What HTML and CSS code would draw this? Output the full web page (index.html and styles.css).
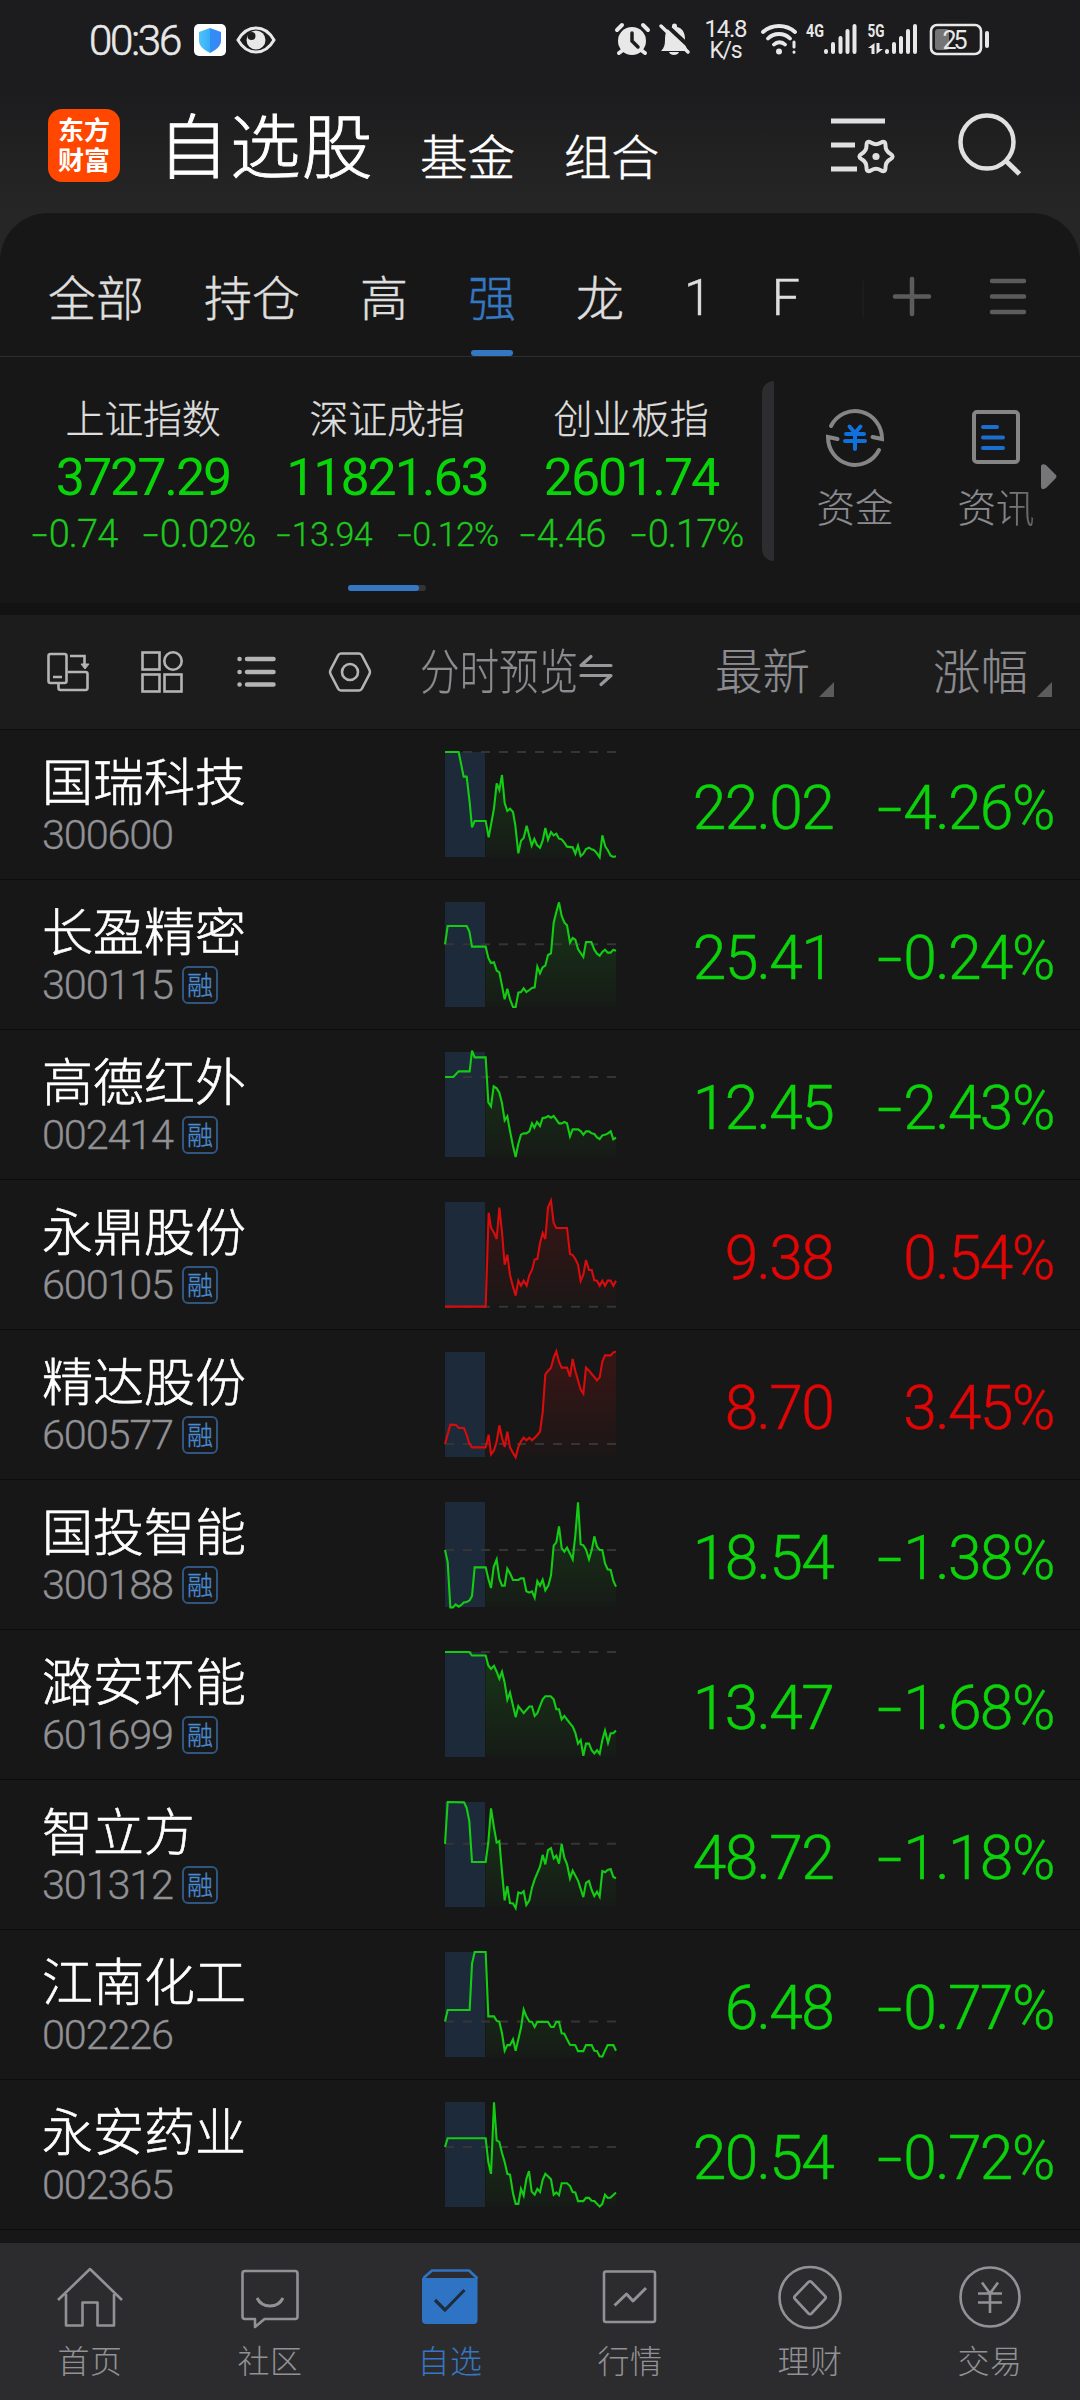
FILE: index.html
```
<!DOCTYPE html>
<html lang="zh-CN">
<head>
<meta charset="utf-8">
<title>自选股</title>
<link rel="stylesheet" href="styles.css">
</head>
<body>
<header class="top">
  <div class="status">
    <span class="clock">00:36</span>
    <svg class="shield" width="32" height="32" viewBox="0 0 32 32"><defs><linearGradient id="sh"><stop offset="0" stop-color="#4cc4fa"/><stop offset=".5" stop-color="#38acf8"/><stop offset=".5" stop-color="#2f8ff5"/><stop offset="1" stop-color="#3a86f6"/></linearGradient></defs><rect width="32" height="32" rx="5" fill="#fff"/><path d="M16 4 27 8v9c0 5-5 9-11 12C10 26 5 22 5 17V8z" fill="url(#sh)"/></svg>
    <svg class="eye" width="40" height="28" viewBox="0 0 40 28"><path d="M2 14C11-2 29-2 38 14 29 30 11 30 2 14z" fill="none" stroke="#e8e8e8" stroke-width="3"/><circle cx="20" cy="14" r="9.5" fill="#e8e8e8"/><circle cx="15.500" cy="10" r="4" fill="#1d1d1e"/></svg>
    <svg class="signals" width="384" height="60" viewBox="612 10 384 60" fill="#e8e8e8">
      <!-- alarm -->
      <circle cx="632" cy="41" r="14"/>
      <path d="M617 30l5-5M648 30l-5-5M623 50l-4 3M641 50l4 3" stroke="#e8e8e8" stroke-width="4" stroke-linecap="round"/>
      <path d="M632 33v8l6 6" fill="none" stroke="#1d1d1e" stroke-width="3.500" stroke-linecap="round"/>
      <!-- muted bell -->
      <path d="M661 51c3-3 4-6 4-11 0-8 2-12 7-13v-1a2.500 2.500 0 0 1 5 0v1c5 1 8 5 8 12 0 5 1 9 3 12zM669 52h10c-1 4-9 4-10 0z"/>
      <path d="M663 22l30 28" stroke="#1d1d1e" stroke-width="4"/>
      <path d="M661 26l27 26" stroke="#e8e8e8" stroke-width="3.500" stroke-linecap="round"/>
      <!-- network speed -->
      <text x="726" y="37" class="st" font-size="24" text-anchor="middle" textLength="43">14.8</text>
      <text x="726" y="58" class="st" font-size="23" text-anchor="middle" textLength="33">K/s</text>
      <!-- wifi -->
      <g fill="none" stroke="#e8e8e8" stroke-width="3.800" stroke-linecap="round"><path d="M763 32c9-8 23-8 32 0M768 38.500c6-6 16-6 22 0M774 44.500c3-3 8-3 11 0"/><path d="M794 42v5M794 52v.2" stroke-width="3"/></g>
      <circle cx="779" cy="51.500" r="3"/>
      <text x="806" y="37" class="st net" font-size="19" textLength="18" lengthAdjust="spacingAndGlyphs">4G</text>
      <text x="867.500" y="37" class="st net" font-size="19" textLength="17" lengthAdjust="spacingAndGlyphs">5G</text>
      <g stroke="#e8e8e8" stroke-width="4" stroke-linecap="round">
        <path d="M826 51v1M833 44v8M840.500 38v14M847.500 31v21M854.500 26v26"/>
        <path d="M887 51v1M894 44v8M901 38v14M908 31v21M915 26v26"/>
      </g>
      <path d="M874.500 54h-3v-6h-3.500l6.500-5zM876.500 43h3v6h3.500l-6.500 5z"/>
      <!-- battery -->
      <rect x="931" y="25" width="50" height="29" rx="6" fill="none" stroke="#e8e8e8" stroke-width="2.600"/>
      <rect x="935" y="29" width="14" height="21" rx="3" fill="#747474"/>
      <rect x="985" y="31" width="4" height="17" rx="2"/>
      <text x="955" y="49" class="st" font-size="25" text-anchor="middle" textLength="25">25</text>
    </svg>
  </div>
  <div class="titlebar">
    <div class="logo"><span>东方</span><span>财富</span></div>
    <h1 class="title">自选股</h1>
    <span class="link">基金</span>
    <span class="link">组合</span>
    <svg class="actions" width="200" height="76" viewBox="826 104 200 76" fill="none" stroke="#e0e0e0">
      <path d="M831 121h54M831 145h24M831 169h26" stroke-width="5"/>
      <path transform="translate(876 156.500)" d="M14.300 2.800Q9.500 5.500 9.500 11 9.500 16.500 4.700 13.700 0 11-4.700 13.700-9.500 16.500-9.500 11-9.500 5.500-14.300 2.800-19 0-14.300-2.800-9.500-5.500-9.500-11-9.500-16.500-4.700-13.700 0-11 4.700-13.700 9.500-16.500 9.500-11 9.500-5.500 14.300-2.800 19 0 14.300 2.800z" stroke-width="4"/>
      <circle cx="876" cy="156.500" r="3.600" fill="#e0e0e0" stroke="none"/>
      <circle cx="987" cy="142" r="26.500" stroke-width="4.500"/><path d="M1006 161l13.500 13" stroke-width="5"/>
    </svg>
  </div>
</header>
<main class="panel">
  <nav class="tabs">
    <span>全部</span><span>持仓</span><span>高</span><span class="on">强</span><span>龙</span><span class="rb">1</span><span class="rb">F</span>
    <svg class="tabtools" width="180" height="44" viewBox="860 274 180 44" fill="none" stroke="#5c5c5c" stroke-width="4.500" stroke-linecap="round">
      <path d="M863 281v36" stroke="#1f1f1f" stroke-width="1.500"/>
      <path d="M895 296.500h34M912 279v35M992 281h32M992 296.500h32M992 312h32"/>
    </svg>
  </nav>
  <section class="indices">
    <div class="index"><div class="iname">上证指数</div><div class="ival">3727.29</div><div class="ichg"><span><i>-</i>0.74</span><span><i>-</i>0.02%</span></div></div>
    <div class="index"><div class="iname">深证成指</div><div class="ival">11821.63</div><div class="ichg small"><span><i>-</i>13.94</span><span><i>-</i>0.12%</span></div></div>
    <div class="index"><div class="iname">创业板指</div><div class="ival">2601.74</div><div class="ichg"><span><i>-</i>4.46</span><span><i>-</i>0.17%</span></div></div>
    <div class="handle"></div>
    <div class="quick money">
      <svg width="60" height="62" viewBox="826 408 60 62" fill="none" stroke="#858585" stroke-width="4" stroke-linecap="round">
        <path d="M832 427A27 27.500 0 0 1 883 440L873.500 438"/>
        <path d="M880 451A27 27.500 0 0 1 829 438L838.500 440"/>
        <path d="M850.500 427.500l5.500 6.500 5.500-6.500M847 435h18M846 442h20M856 434v16" stroke="#1070dc"/>
      </svg>
      <span>资金</span>
    </div>
    <div class="quick news">
      <svg width="60" height="62" viewBox="967 408 60 62" fill="none" stroke="#858585" stroke-width="4" stroke-linecap="round">
        <rect x="975" y="413" width="44" height="50" rx="3"/>
        <path d="M984 428h14M984 438.500h20M984 449h20" stroke="#1a6fd0"/>
      </svg>
      <span>资<b>讯</b></span>
    </div>
    <svg class="more" width="16" height="26" viewBox="0 0 16 26"><path d="M0 3Q0-1 5 1L14 10Q17 12.500 14 15L5 24Q0 27 0 22z" fill="#767678"/></svg>
    <div class="pager"><div></div></div>
  </section>
  <section class="toolbar">
    <svg width="330" height="46" viewBox="44 649 330 46" fill="none" stroke="#b4b4b4" stroke-width="2.600">
      <rect x="48.500" y="654" width="18" height="29" rx="2"/><path d="M53 677h9M58.500 684v4q0 2 2 2h25q2 0 2-2v-14q0-2-2-2h-18M70 656h14.500v9"/><path d="M81 664h8l-4 5z" fill="#b4b4b4" stroke-width="1"/>
      <rect x="142.500" y="652.500" width="17" height="17"/><circle cx="173" cy="661" r="8.700"/><rect x="142.500" y="674.500" width="17" height="17"/><rect x="164.500" y="674.500" width="17" height="17"/>
      <path d="M247 659h26.500M247 672h26.500M247 684.500h26.500M239.500 659h.1M239.500 672h.1M239.500 684.500h.1" stroke-width="4.500" stroke-linecap="round"/>
      <path d="M341 653.500h18q2 0 3 2l7.500 14.500q1 2 0 4l-7.500 14.500q-1 2-3 2h-18q-2 0-3-2l-7.500-14.500q-1-2 0-4l7.500-14.500q1-2 3-2z"/><circle cx="350" cy="672" r="8"/>
    </svg>
    <div class="preview"><span>分时预览</span></div>
    <svg class="swap" width="36" height="36" viewBox="578 653 36 36" fill="none" stroke="#98989c" stroke-width="3.200" stroke-linecap="round" stroke-linejoin="round"><path d="M611 665.500h-30l10-9M581 675.500h30l-10 9"/></svg>
    <div class="th last">最新<i></i></div>
    <div class="th chg">涨幅<i></i></div>
  </section>
  <section class="list" id="list"></section>
</main>
<nav class="bottom">
  <div><svg viewBox="-40 0 80 70"><path d="M-32 37 0 6 32 37M-24 31v31.500h16.500V39.500H7.500v23H24V31"/></svg>首页</div>
  <div><svg viewBox="-40 0 80 70"><path d="M-25 8h50q2.500 0 2.500 2.500v43q0 2.500-2.500 2.500h-30.500l-9.500 8v-8h-10q-2.500 0-2.500-2.500v-43q0-2.500 2.500-2.500z"/><path d="M-13 35q4 8 13 8t13-8" stroke-width="3"/></svg>社区</div>
  <div class="on"><svg viewBox="-40 0 80 70"><path d="M-26.500 15-18 7.500h37l8.500 8" /><path d="M-28 15h55.500v42q0 4-4 4h-47.500q-4 0-4-4z" fill="#2f74c4" stroke="none"/><path d="M-15 37l10 10 19.500-20" stroke="#1f2c3c" stroke-width="3.200"/></svg>自选</div>
  <div><svg viewBox="-40 0 80 70"><rect x="-26" y="8.500" width="51" height="50.500" rx="2"/><path d="M-15.500 42.500-3.500 31l6.500 7L16 25" stroke-width="3"/></svg>行情</div>
  <div><svg viewBox="-40 0 80 70"><circle cy="34.500" r="30.500"/><path d="M-1.500 19q1.500-1.500 3 0l13.500 14q1.500 1.500 0 3L1.500 50.500q-1.500 1.500-3 0L-15 36q-1.500-1.500 0-3z"/></svg>理财</div>
  <div><svg viewBox="-40 0 80 70"><circle cy="34" r="29.500"/><path d="M-8 19.500 0 30.500 8 19.500M0 30v20M-12 30.500h24M-12 39.500h24"/></svg>交易</div>
</nav>
<script src="list.js"></script>
</body>
</html>
```
FILE: styles.css
```
*{box-sizing:border-box}
body{margin:0;width:1080px;height:2400px;overflow:hidden;background:linear-gradient(#1c1c1e 0,#1c1c1e 90px,#262626 213px,#262626 300px,#171717 300px);color:#fff;font-family:"Noto Sans CJK SC",sans-serif;font-weight:300;display:flex;flex-direction:column}
svg{display:block;flex:none}
i{font-style:normal}
.top{height:213px;flex:none}
.status{height:80px;display:flex;align-items:center;padding-left:89px}
.clock{font:300 42px/80px Roboto,sans-serif;letter-spacing:-2.200px;color:#e8e8e8;width:105px;padding-top:2px;-webkit-text-stroke:.6px #e8e8e8}
.eye{margin-left:10px}
.signals{margin-left:336px}
.st{font-family:Roboto,sans-serif;font-weight:400}
.net{font-weight:700}
.titlebar{height:133px;display:flex;padding-left:48px}
.logo{width:72px;height:73px;margin-top:29px;border-radius:14px;background:#ff4700;display:flex;flex-direction:column;align-items:center;padding-top:5px;font-weight:700;font-size:26px;line-height:30px}
.title{margin:17px 0 0 38px;font-size:70.500px;line-height:90px;font-weight:300;letter-spacing:1.500px;width:215px;white-space:nowrap;-webkit-text-stroke:.9px #fff}
.link{font-size:47.500px;line-height:60px;margin:45px 0 0 47px;width:97px;white-space:nowrap;-webkit-text-stroke:.5px #fff}
.actions{margin:24px 54px 0 auto}
.panel{flex:none;background:#171717;border-radius:48px 48px 0 0;height:2030px}
.tabs{height:144px;border-bottom:1px solid #2d2d2d;display:flex;gap:60px;padding-left:48px;font-size:48px;line-height:164px;color:#dedede;-webkit-text-stroke:.4px}
.tabs span{position:relative;height:143px}
.tabs .rb{font:300 50px/171px Roboto,sans-serif}
.tabs .on{color:#3577c2}
.tabs .on::after{content:"";position:absolute;left:3px;bottom:0;width:42px;height:6px;border-radius:3px;background:#3577c2}
.tabtools{margin:61px 40px 0 auto}
.indices{height:246px;display:flex;padding-left:21px;position:relative}
.index{width:244px;flex:none;text-align:center;white-space:nowrap;padding-top:36px}
.iname{font-size:39px;line-height:46px;color:#dedede;letter-spacing:-.2px;-webkit-text-stroke:.3px}
.ival{font:400 52px/60px Roboto,sans-serif;letter-spacing:-2.100px;color:#09d409;margin-top:9px}
.ichg{display:flex;justify-content:center;gap:24px;font:300 38px/52px Roboto,sans-serif;letter-spacing:-.900px;color:#1ec81e;-webkit-text-stroke:.3px}
.ichg.small{font-size:34px;line-height:53px;letter-spacing:-.7px}
.ichg i{display:inline-block;width:.48em;text-align:center;transform:scaleX(1.5)}
.num i{display:inline-block;width:.48em;text-align:center;transform:scaleX(1.5)}
.handle{width:12px;height:180px;margin:24px 0 0 9px;border-radius:12px 0 0 12px;background:#2d2d2f}
.quick{font-size:38.500px;line-height:46px;color:#8c8c90;width:78px;display:flex;flex-direction:column;align-items:center;padding-top:50px;white-space:nowrap;-webkit-text-stroke:.2px}
.quick span{margin-top:13px}
.quick b{font-weight:300;background:linear-gradient(90deg,#8c8c90,#606064);-webkit-background-clip:text;color:transparent}
.money{margin-left:42px}
.news{margin-left:63px}
.more{margin:107px 0 0 6px}
.pager{position:absolute;left:348px;top:228px;width:78px;height:6px;border-radius:3px;background:#343436}
.pager div{width:71px;height:6px;border-radius:3px;background:#3577c2}
.toolbar{height:127px;border-top:12px solid #121212;border-bottom:1px solid #0e0e0e;background:#1c1c1c;display:flex;padding-left:44px;color:#8c8c90;-webkit-text-stroke:.2px}
.toolbar>svg{margin-top:34px}
.preview{width:158px;margin-left:46px;font-size:48px;line-height:106px}
.preview span{display:inline-block;white-space:nowrap;transform:scaleX(.824);transform-origin:0 50%}
.toolbar .swap{margin:38px 0 0 0}
.th{font-size:47.500px;line-height:107px;white-space:nowrap;display:flex}
.th i{width:0;height:0;border-left:15px solid transparent;border-bottom:15px solid #5c5c5e;margin:67px 0 0 9px}
.last{margin-left:101px}
.chg{margin-left:99px}
.row{height:150px;border-bottom:1px solid #0d0d0d;display:flex}
.who{width:401px;padding:15px 0 0 42px}
.name{font-size:51px;line-height:68px;white-space:nowrap;-webkit-text-stroke:.6px #fff}
.code{display:flex;align-items:center;height:38px;margin-top:3px;font:300 41.500px/38px Roboto,sans-serif;letter-spacing:-1.200px;color:#919195;-webkit-text-stroke:.3px}
.badge{width:36px;height:38px;margin-left:9px;border:2px solid #2f5580;border-radius:6px;font:300 26px/31px "Noto Sans CJK SC",sans-serif;letter-spacing:0;text-align:center;color:#4a8ad2}
.chart{margin:22px 0 0 44px;overflow:visible}
.chart path,.chart polyline{vector-effect:non-scaling-stroke;fill:none}
.num{font:300 60.500px/158px Roboto,sans-serif;letter-spacing:-1.700px;text-align:right;white-space:nowrap;-webkit-text-stroke:.5px}
.price{width:217px}
.pct{width:221px}
.down{color:#0cd20c}
.up{color:#e00606}
.num em{font-style:normal;display:inline-block;width:.7em;transform:scaleX(.97);transform-origin:0 50%}
.bottom{flex:none;height:157px;background:#2c2c2e;display:flex;font-size:32px;letter-spacing:.6px;line-height:38px;color:#929296}
.bottom>div{width:180px;display:flex;flex-direction:column;align-items:center;padding-top:20px}
.bottom svg{width:80px;height:70px;margin-bottom:7px;fill:none;stroke:#929296;stroke-width:2.600;stroke-linejoin:round}
.bottom .on{color:#3577c2}
.bottom .on svg{stroke:#2f74c4}
```
FILE: list.js
```
// Points are [x y] pairs; x runs 45..558, the pre-market session ends at x = 167.
const stocks = [
  ["国瑞科技", "300600", 0, "22.02", "-4.26", 0, 49, 315, 49, "45 49 86 49 101 123 110 123 119 200 126 275 134 256 167 256 176 305 184 262 192 218 200 143 208 163 216 118 224 202 232 226 240 219 249 229 256 270 265 353 273 315 281 307 290 270 298 302 305 330 313 310 321 328 330 336 338 315 346 277 354 312 363 289 371 299 379 294 387 309 395 311 403 321 411 333 428 335 436 354 444 330 452 361 460 354 468 340 477 336 485 341 493 344 501 353 509 365 517 299 526 333 533 343 542 360 550 364 558 362"],
  ["长盈精密", "300115", 1, "25.41", "-0.24", 0, 500, 315, 627, "45 627 53 572 110 572 118 588 126 634 167 634 175 668 183 683 192 681 200 706 208 711 216 751 224 792 232 760 240 792 249 815 257 815 265 772 273 770 281 759 289 770 298 764 306 758 314 756 322 694 330 714 338 696 346 691 354 659 363 654 371 562 379 530 387 501 395 542 403 561 411 570 420 622 428 608 436 613 444 641 452 653 460 665 468 620 484 620 493 643 501 655 509 661 517 650 525 643 533 652 542 652 550 643 558 646"],
  ["高德红外", "002414", 1, "12.45", "-2.43", 0, 950, 315, 1025, "45 1025 70 1025 86 1008 119 1008 126 946 134 966 167 966 175 1101 183 1113 191 1053 200 1059 208 1072 216 1104 224 1155 232 1143 240 1187 249 1232 257 1265 265 1225 273 1198 281 1194 289 1194 298 1188 306 1164 313 1177 321 1160 330 1172 338 1148 346 1147 355 1142 363 1147 371 1142 387 1164 395 1164 403 1160 411 1164 420 1203 428 1182 444 1182 452 1187 460 1198 468 1188 477 1188 485 1194 493 1196 501 1206 509 1211 517 1200 525 1198 533 1195 542 1188 550 1212 558 1207"],
  ["永鼎股份", "600105", 1, "9.38", "0.54", 1, 80, 315, 394, "45 394 167 394 176 112 183 157 192 172 200 191 208 97 216 170 224 268 232 238 240 299 249 334 257 361 265 316 273 331 281 316 290 331 298 300 306 284 314 252 322 251 330 204 338 173 346 191 354 96 363 76 371 143 379 158 411 158 420 236 428 239 436 251 444 268 452 317 460 298 468 254 477 284 485 284 493 315 501 316 509 331 517 316 525 331 533 316 542 316 550 331 558 316"],
  ["精达股份", "600577", 1, "8.70", "3.45", 1, 530, 315, 806, "45 806 61 748 78 749 86 758 102 758 110 779 118 805 126 816 167 816 176 778 183 837 192 825 200 799 208 750 216 787 224 815 232 769 240 816 249 833 257 846 265 815 273 798 281 787 289 795 298 787 306 795 314 787 322 779 330 769 338 711 346 597 354 587 363 577 371 547 379 528 387 559 395 577 411 577 420 604 428 551 436 587 444 615 452 643 460 655 468 577 477 586 485 596 493 605 501 615 509 606 517 559 525 540 542 540 550 531 558 529"],
  ["国投智能", "300188", 1, "18.54", "-1.38", 0, 980, 315, 1124, "45 1124 53 1160 61 1296 69 1296 77 1287 86 1294 94 1289 102 1281 110 1280 119 1275 126 1262 134 1176 167 1176 175 1210 183 1238 191 1175 200 1152 208 1210 216 1231 224 1231 232 1180 240 1194 249 1214 265 1214 273 1209 281 1209 289 1248 298 1252 306 1248 314 1267 322 1217 330 1231 338 1213 346 1245 355 1231 363 1200 371 1111 379 1101 387 1053 395 1118 403 1129 411 1117 420 1135 428 1152 436 1080 444 981 452 1107 460 1110 468 1122 477 1152 485 1125 493 1083 501 1114 509 1124 517 1124 525 1164 533 1182 542 1184 550 1217 558 1234"],
  ["潞安环能", "601699", 1, "13.47", "-1.68", 0, 92, 266, 92, "45 92 118 92 126 101 167 101 175 126 183 135 192 127 200 142 208 160 216 142 224 170 232 213 240 195 249 228 257 257 265 229 281 247 298 230 306 230 314 254 322 247 330 229 338 212 346 204 362 204 371 212 379 237 387 237 395 263 403 254 411 263 420 273 428 281 436 297 444 324 452 315 460 355 468 324 477 324 485 341 493 349 501 341 509 350 517 315 525 291 534 322 542 298 550 298 558 291"],
  ["智立方", "301312", 1, "48.72", "-1.18", 0, 471, 266, 577, "45 577 53 471 102 472 110 486 118 520 126 623 167 623 175 573 183 487 192 536 200 574 208 570 216 648 224 720 232 684 240 727 249 728 257 740 265 700 273 703 281 697 289 732 298 720 306 688 314 667 330 635 338 605 346 629 354 593 363 588 371 614 379 607 387 627 395 577 403 612 411 628 420 665 428 645 444 670 460 712 468 676 477 671 485 694 493 709 501 698 509 711 517 646 525 649 533 643 542 641 550 661 558 664"],
  ["江南化工", "002226", 0, "6.48", "-0.77", 0, 851, 266, 1027, "45 1027 53 998 119 998 126 881 134 851 167 851 175 1014 192 1014 200 1025 208 1028 216 1057 224 1101 232 1087 240 1087 249 1072 257 1101 265 1072 273 1043 281 997 289 1014 298 1027 306 1028 314 1041 322 1028 354 1028 363 1041 371 1041 379 1028 387 1028 395 1057 403 1058 411 1072 420 1086 436 1087 444 1102 460 1102 468 1087 485 1087 493 1101 501 1102 509 1115 517 1116 525 1101 533 1087 550 1087 558 1101"],
  ["永安药业", "002365", 0, "20.54", "-0.72", 0, 1230, 266, 1344, "45 1344 53 1322 167 1322 175 1382 183 1412 192 1231 200 1327 208 1331 216 1359 224 1382 232 1412 240 1414 249 1461 257 1488 265 1488 273 1450 281 1467 289 1425 297 1405 305 1457 314 1465 322 1450 330 1458 338 1427 346 1412 363 1426 371 1465 379 1459 387 1466 395 1436 411 1436 420 1443 428 1458 436 1459 444 1481 460 1481 468 1473 477 1473 485 1480 493 1481 509 1495 517 1488 525 1465 533 1473 542 1472 558 1459"]
];

const minus = s => s.replace("-", "<i>-</i>");

document.getElementById("list").innerHTML = stocks.map(([name, code, margin, price, pct, up, y0, h, base, pts], n) => {
  const p = pts.split(" ").map(Number);
  const pairs = [];
  for (let k = 0; k < p.length; k += 2) pairs.push([p[k], p[k + 1]]);
  const open = pairs.filter(q => q[0] >= 167);
  const color = up ? "#d80c0c" : "#14cc14";
  const area = `M167 ${y0 + h}L${open.map(q => q.join(" ")).join("L")}V${y0 + h}z`;
  return `<div class="row">
  <div class="who"><div class="name">${name}</div><div class="code">${code}${margin ? '<span class="badge">融</span>' : ""}</div></div>
  <svg class="chart" width="171" height="105" viewBox="45 ${y0} 513 ${h}" preserveAspectRatio="none">
    <defs><linearGradient id="g${n}" x1="0" y1="${y0}" x2="0" y2="${y0 + h}" gradientUnits="userSpaceOnUse"><stop stop-color="${color}" stop-opacity=".18"/><stop offset="1" stop-color="${color}" stop-opacity=".02"/></linearGradient></defs>
    <rect x="45" y="${y0}" width="120" height="${h}" fill="#1d2a3a"/>
    <path d="${area}" style="fill:url(#g${n})"/>
    <path d="M45 ${base}H558" stroke="#353535" stroke-width="2" stroke-dasharray="9 9"/>
    <polyline points="${pts}" stroke="${color}" stroke-width="2.1"/>
  </svg>
  <div class="num price ${up ? "up" : "down"}">${price}</div>
  <div class="num pct ${up ? "up" : "down"}">${minus(pct)}<em>%</em></div>
</div>`;
}).join("");
```
